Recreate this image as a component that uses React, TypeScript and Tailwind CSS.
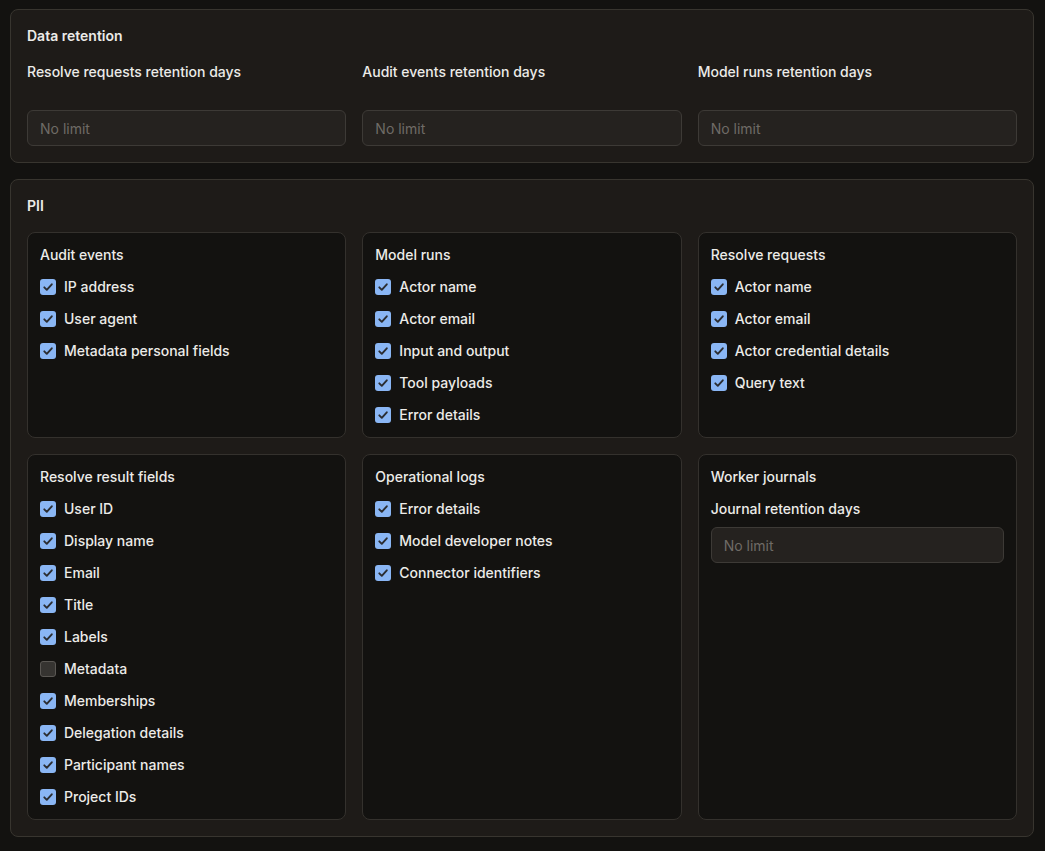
const FONT = { fontFamily: "Inter, 'Noto Sans', sans-serif" };

type Item = { label: string; checked: boolean };

const groups: { title: string; items: Item[] }[] = [
  {
    title: "Audit events",
    items: [
      { label: "IP address", checked: true },
      { label: "User agent", checked: true },
      { label: "Metadata personal fields", checked: true },
    ],
  },
  {
    title: "Model runs",
    items: [
      { label: "Actor name", checked: true },
      { label: "Actor email", checked: true },
      { label: "Input and output", checked: true },
      { label: "Tool payloads", checked: true },
      { label: "Error details", checked: true },
    ],
  },
  {
    title: "Resolve requests",
    items: [
      { label: "Actor name", checked: true },
      { label: "Actor email", checked: true },
      { label: "Actor credential details", checked: true },
      { label: "Query text", checked: true },
    ],
  },
  {
    title: "Resolve result fields",
    items: [
      { label: "User ID", checked: true },
      { label: "Display name", checked: true },
      { label: "Email", checked: true },
      { label: "Title", checked: true },
      { label: "Labels", checked: true },
      { label: "Metadata", checked: false },
      { label: "Memberships", checked: true },
      { label: "Delegation details", checked: true },
      { label: "Participant names", checked: true },
      { label: "Project IDs", checked: true },
    ],
  },
  {
    title: "Operational logs",
    items: [
      { label: "Error details", checked: true },
      { label: "Model developer notes", checked: true },
      { label: "Connector identifiers", checked: true },
    ],
  },
];

function Checkbox({ checked }: { checked: boolean }) {
  if (!checked) {
    return <span className="w-4 h-4 rounded-[3px] bg-[#363431] border border-[#5a5753] shrink-0" />;
  }
  return (
    <span className="w-4 h-4 rounded-[3px] bg-[#8ab6f4] shrink-0 flex items-center justify-center">
      <svg width="12" height="12" viewBox="0 0 12 12" fill="none">
        <path d="M2.3 6.3 4.8 8.8 9.8 3.3" stroke="#2b2d31" strokeWidth="1.9" strokeLinecap="round" strokeLinejoin="round" />
      </svg>
    </span>
  );
}

function NoLimitInput() {
  return (
    <input
      placeholder="No limit"
      className="w-full h-9 px-3 rounded-md bg-[#25221f] border border-[#3d3a36] text-sm text-[#e8e6e3] placeholder:text-[#6f6b66] outline-none"
      style={FONT}
    />
  );
}

function GroupCard({ title, items }: { title: string; items: Item[] }) {
  return (
    <div className="rounded-lg border border-[#34312d] bg-[#131210] p-3 flex flex-col gap-3">
      <div className="text-sm font-medium leading-5 text-[#ecebe8]">{title}</div>
      {items.map((it, i) => (
        <label key={i} className="flex items-center gap-2 h-5 text-sm font-medium text-[#ecebe8]">
          <Checkbox checked={it.checked} />
          <span>{it.label}</span>
        </label>
      ))}
    </div>
  );
}

export default function App() {
  return (
    <div className="min-h-[851px] bg-[#131210] pt-[9px] pl-[10px] pr-[11px] pb-4 flex flex-col gap-4" style={FONT}>
      <section className="rounded-lg border border-[#38352f] bg-[#1e1b18] p-4">
        <h2 className="text-sm font-semibold leading-5 text-[#ecebe8]">Data retention</h2>
        <div className="grid grid-cols-3 gap-4 mt-4">
          {["Resolve requests retention days", "Audit events retention days", "Model runs retention days"].map((l) => (
            <div key={l} className="flex flex-col">
              <div className="text-sm font-medium leading-5 text-[#ecebe8] mb-7">{l}</div>
              <NoLimitInput />
            </div>
          ))}
        </div>
      </section>

      <section className="rounded-lg border border-[#38352f] bg-[#1e1b18] p-4">
        <h2 className="text-sm font-semibold leading-5 text-[#ecebe8]">PII</h2>
        <div className="grid grid-cols-3 gap-4 mt-4">
          {groups.slice(0, 3).map((g) => (
            <GroupCard key={g.title} title={g.title} items={g.items} />
          ))}
          {groups.slice(3).map((g) => (
            <GroupCard key={g.title} title={g.title} items={g.items} />
          ))}
          <div className="rounded-lg border border-[#34312d] bg-[#131210] p-3 flex flex-col">
            <div className="text-sm font-medium leading-5 text-[#ecebe8]">Worker journals</div>
            <div className="text-sm font-medium leading-5 text-[#ecebe8] mt-3 mb-2">Journal retention days</div>
            <NoLimitInput />
          </div>
        </div>
      </section>
    </div>
  );
}
